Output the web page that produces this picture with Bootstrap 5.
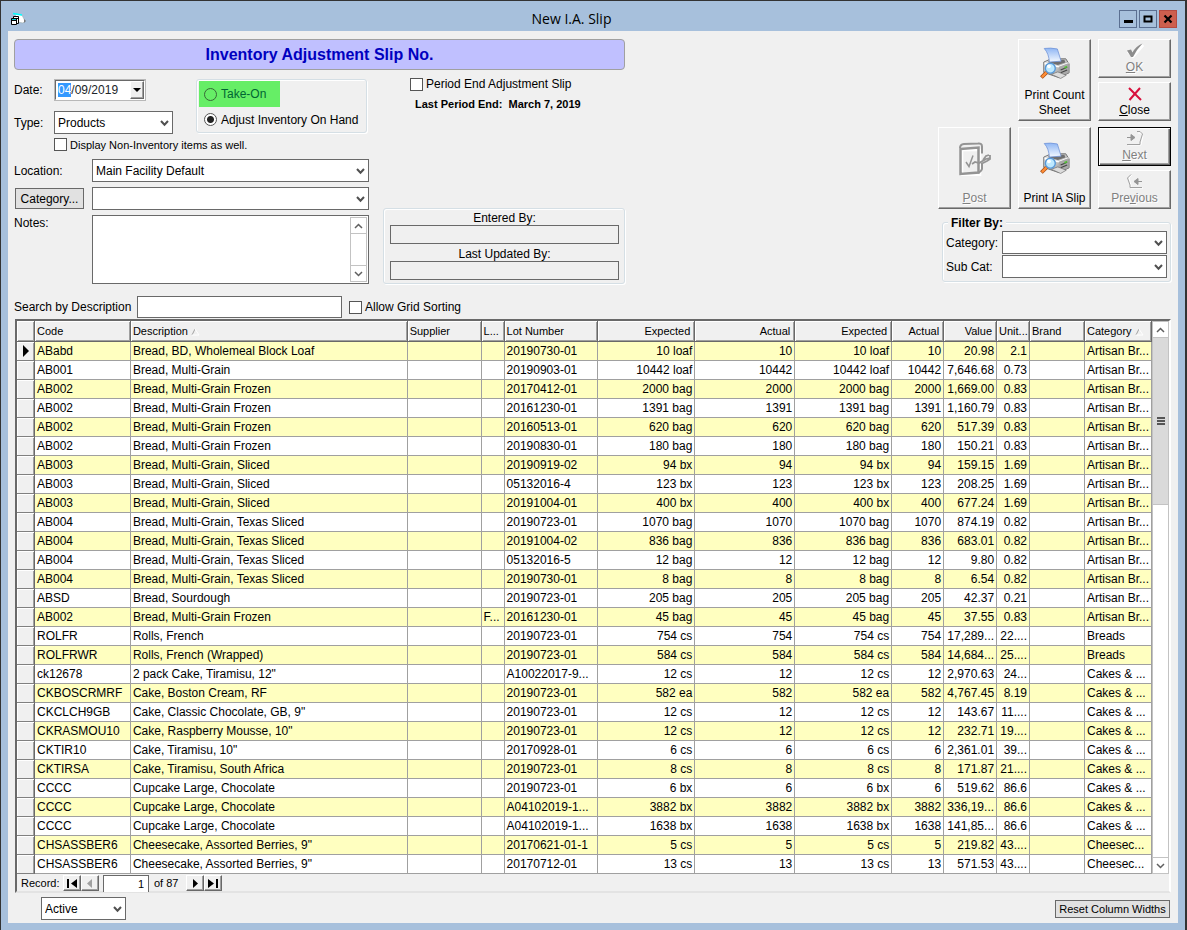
<!DOCTYPE html>
<html lang="en">
<head>
<meta charset="utf-8">
<meta name="viewport" content="width=device-width, initial-scale=1">
<title>New I.A. Slip</title>
<link href="https://cdn.jsdelivr.net/npm/bootstrap@5.3.0/dist/css/bootstrap.min.css" rel="stylesheet">
<style>
  :root { --face: #f0f0f0; --line: #a0a0a0; --dark: #696969; --frame: #a7c0dc; }
  body { background: var(--frame); color: #000; font: 12px/16px "Liberation Sans", Arial, sans-serif; min-height: 100vh; border: 1px solid #333; border-right-width: 2px; border-bottom: 0; }
  .defs { position: absolute; width: 0; height: 0; }
  .titlebar { height: 30px; padding: 0 8px 0 9px; }
  .titlebar h1 { font: 14px/20px "Open Sans", "Noto Sans", sans-serif; padding: 8px 19px 0 16px; }
  .winbtns { gap: 2px; }
  .winbtn { width: 18px; height: 18px; border: 1px solid #5b6f91; background: var(--frame); padding: 0; margin-top: 9px; display: flex; align-items: center; justify-content: center; }
  .winbtn.quit { background: #cd5f4e; border-color: #b64a40; }
  .client { background: var(--face); margin: 0 7px 7px; padding: 8px 7px 3px 6px; }
  .left-side { flex: 0 1 611px; }
  .banner { height: 31px; border: 1px solid var(--line); border-radius: 4px; background: #c0c0ff; color: #0000c0; font: bold 16px/29px "Liberation Sans", Arial, sans-serif; text-align: center; }
  .columns { padding-top: 9px; }
  .form-part { width: 355px; }
  .who-part { flex: 1; margin-left: 14px; }
  .form-select, .form-control { font-size: 12px; line-height: 16px; color: #000; border: 1px solid var(--dark); border-radius: 0; background-color: #fff; padding: 0 4px; height: 23px; min-height: 0; }
  .form-select { padding-left: 3px; background-image: url("data:image/svg+xml,%3Csvg xmlns='http://www.w3.org/2000/svg' viewBox='0 0 9 7'%3E%3Cpath d='M1 1l3.500 3.800L8 1' fill='none' stroke='%23505050' stroke-width='2'/%3E%3C/svg%3E"); background-size: 9px 7px; background-position: right 3px top 8px; }
  .form-control:focus { box-shadow: none; border-color: var(--dark); }
  .tag-short { width: 40px; } .tag-mid { width: 78px; flex: none; }
  .row-type { padding-top: 10px; } .row-type .form-select { width: 119px; }
  .row-extra { padding: 2px 0 0 40px; gap: 3px; height: 19px; }
  .row-next { padding-top: 5px; } .row-first { padding-top: 6px; }
  .row-search { padding-top: 12px; gap: 3px; }
  .row-search label:first-child { width: 120px; }
  .row-search .form-control { width: 205px; height: 22px; margin-right: 4px; }
  .date-box { width: 92px; height: 22px; border: 2px solid; border-color: var(--dark) #fff #fff var(--dark); outline: 1px solid #b8b8b8; outline-offset: -1px; background: #fff; }
  .date-box .form-control { border: 0; height: 18px; padding: 0 0 0 2px; }
  .date-box ::selection { background: #3399ff; color: #fff; }
  .raised { background: var(--face); border: 1px solid; border-color: #fff var(--dark) var(--dark) #fff; box-shadow: inset -1px -1px var(--line); padding: 0; color: #000; font-size: 12px; line-height: 16px; border-radius: 0; }
  .date-box .raised { width: 17px; height: 18px; }
  .group { border: 1px solid #d5dfe5; border-radius: 3px; box-shadow: inset 1px 1px #fff, 1px 1px #fff; }
  .tick { appearance: none; width: 13px; height: 13px; margin: 0; border: 1px solid #555; background: #fff; flex: none; }
  .tick[type=radio] { border-radius: 50%; }
  .tick[type=radio]:checked { background: radial-gradient(circle, #222 3px, #fff 4px); }
  .mode-box { width: 171px; height: 54px; padding: 1px 2px; margin: 0 2px 0 auto; }
  .take-on { background: #66ee66; height: 26px; width: 81px; padding-left: 5px; color: #063; }
  .take-on .tick { background: transparent; border-color: #386838; }
  .adjust-on { height: 25px; padding-left: 5px; }
  .flatbtn { border: 1px solid var(--dark); background: #e1e1e1; padding: 0; border-radius: 0; color: #000; }
  .cat-btn { width: 69px; height: 21px; margin-left: 1px; }
  .reset-btn { width: 115px; height: 18px; line-height: 14px; }
  .notes { border: 1px solid var(--dark); background: #fff; height: 69px; padding: 1px; }
  .notes textarea { border: 0; height: auto; resize: none; }
  .sbar { width: 17px; background: #fff; border: 1px solid #c3c3c3; flex: none; }
  .sbar button { height: 16px; border: 0; background: #fff; padding: 0; display: flex; align-items: center; justify-content: center; }
  .sbar button:first-child { border-bottom: 1px solid #c3c3c3; }
  .sbar button:last-child { border-top: 1px solid #c3c3c3; }
  .small-text { font-size: 11px; }
  .row-period { padding-left: 27px; gap: 3px; height: 10px; }
  .last-period { padding: 7px 0 0 32px; }
  .who { height: 76px; padding: 1px 5px 0 6px; line-height: 14px; }
  .who label { padding-top: 1px; }
  .who .form-control { height: 19px; background: var(--face); margin-bottom: 2px; }
  .tools { gap: 7px; } .tools:first-child { margin-bottom: 6px; }
  .tool { width: 73px; height: 39px; display: flex; flex-direction: column; align-items: center; justify-content: flex-end; line-height: 15px; padding-bottom: 2px; }
  .tool.tall { height: 82px; }
  .tool svg { margin-bottom: 2px; }
  .tool.tall svg { margin-bottom: auto; margin-top: 7px; }
  .tool.tall svg.low { margin-top: 14px; }
  .tool:disabled { color: #808080; text-shadow: 1px 1px #fff; }
  .tool.default { outline: 1px solid #000; outline-offset: -1px; border-color: #000; box-shadow: inset 1px 1px #fff, inset -1px -1px var(--dark), inset -2px -2px var(--line); }
  .filter { width: 229px; height: 60px; margin-top: 13px; padding: 8px 3px 0 3px; position: relative; }
  .filter legend { position: absolute; top: -8px; left: 5px; width: auto; padding: 0 3px; margin: 0; background: var(--face); font: bold 12px/16px "Liberation Sans", Arial, sans-serif; }
  .filter label { width: 56px; flex: none; }
  .filter .form-select { margin-bottom: 1px; }
  .grid-frame { margin: 1px 0 0 1px; border: 2px solid; border-color: var(--dark) #fff #e3e3e3 var(--dark); }
  .slips { table-layout: fixed; width: 100%; border-collapse: separate; border-spacing: 0; }
  .slips th { height: 21px; line-height: 17px; padding: 1px 4px 0 2px; font-weight: normal; font-size: 11px; background: var(--face); border-right: 1px solid var(--dark); border-bottom: 1px solid var(--dark); box-shadow: inset 1px 1px #fff, inset -1px -1px var(--line); white-space: nowrap; overflow: hidden; }
  .slips td { height: 19px; line-height: 18px; padding: 0 2px; border-right: 1px solid var(--line); border-bottom: 1px solid var(--line); white-space: nowrap; overflow: hidden; background: #fff; }
  .slips tbody tr:nth-child(odd) td { background: #ffffc0; }
  .slips tbody tr td:first-child { background: var(--face); border-right-color: var(--dark); box-shadow: inset 1px 1px #fff, inset -1px 0 var(--line); border-bottom-color: #808080; }
  .thumb { height: 167px; background: #dadada; border-bottom: 1px solid #c3c3c3; display: flex; align-items: center; justify-content: center; }
  .record { height: 17px; font-size: 11px; padding: 1px 0 0 4px; }
  .record label { width: 42px; } .record span { width: 32px; }
  .record .raised { width: 18px; height: 16px; display: flex; align-items: center; justify-content: center; }
  .record .form-control { width: 46px; height: 17px; font-size: 11px; padding: 0 4px; border-bottom: 0; margin: 0 5px 0 4px; }
  .bottom-bar { padding: 4px 1px 0 27px; } .bottom-bar .form-select { width: 85px; }
</style>
</head>
<body>
<svg class="defs" aria-hidden="true">
  <defs>
    <linearGradient id="sheet" x1="0" y1="0" x2="0" y2="1"><stop offset="0" stop-color="#8fb6f4"/><stop offset="1" stop-color="#f4f9ff"/></linearGradient>
    <linearGradient id="case" x1="0" y1="0" x2="1" y2="1"><stop offset="0" stop-color="#f2f2f2"/><stop offset="1" stop-color="#8c8c8c"/></linearGradient>
    <symbol id="printer" viewBox="0 0 32 34">
      <path d="M4 16L12 12.500h15.500L31 18v9.500L20 32.500 4 27z" fill="url(#case)" stroke="#6e6e6e"/>
      <path d="M5 17.500l15 3.500 10.500-4" fill="none" stroke="#fff" stroke-width="1.500"/>
      <path d="M20 21v11l10.500-4.500V17z" fill="#a9a9a9"/>
      <path d="M8 16l5-2.500h13l1 3-8 2.500z" fill="#6f6f6f"/>
      <path d="M4.500 1.500Q11 .5 18.500 2l4 13-12.500 1Q9.500 7 4.500 1.500z" fill="url(#sheet)" stroke="#6b8fd6" stroke-width=".8"/>
      <path d="M22 24.500l7-3M22 27.500l7-3" stroke="#444" stroke-width="1.200"/>
      <path d="M26 21l3-1.200v2L26 23z" fill="#52c234"/>
      <path d="M12 29l7-2.500 9 3.500-6 3.500z" fill="#dcdcdc" stroke="#777" stroke-width=".8"/>
      <path d="M7 27l-5.500 5.500" stroke="#a04a14" stroke-width="4"/><path d="M7 27l-5 5" stroke="#ff8d35" stroke-width="2.500"/>
      <circle cx="11" cy="22.500" r="5.300" fill="#bde9ff" stroke="#5798d8" stroke-width="1.500"/>
      <circle cx="9.500" cy="20.500" r="2" fill="#fff"/>
    </symbol>
    <symbol id="up" viewBox="0 0 9 6"><path d="M1 5l3.500-3.500L8 5" fill="none" stroke="#606060" stroke-width="1.500"/></symbol>
    <symbol id="down" viewBox="0 0 9 6"><path d="M1 1l3.500 3.500L8 1" fill="none" stroke="#606060" stroke-width="1.500"/></symbol>
  </defs>
</svg>

<header class="titlebar d-flex">
  <svg class="mt-2" width="17" height="20" viewBox="0 0 17 20" aria-hidden="true">
    <path d="M5 5l7 1 3 6-2 2-6-1z" fill="#fff" stroke="#9aa" stroke-width=".6"/><path d="M3 4.500l9 1.500" stroke="#0ff" stroke-width="1.500"/><path d="M14 10l2 2-2 2" fill="#777"/>
    <path d="M3.500 7.500h5v7h-5z" fill="#fff" stroke="#000"/><path d="M1.500 9.500h5v6h-5z" fill="#fff" stroke="#000"/><path d="M1 11.500h6M4 9.500h5" stroke="#000"/><path d="M2 10.500h4" stroke="#0cc"/>
  </svg>
  <h1 class="flex-grow-1 text-center m-0">New I.A. Slip</h1>
  <div class="winbtns d-flex">
    <button class="winbtn" type="button" aria-label="Minimize"><svg width="10" height="10"><path d="M1 7.500h9" stroke="#000" stroke-width="3"/></svg></button>
    <button class="winbtn" type="button" aria-label="Maximize"><svg width="10" height="10"><path d="M1.500 2.500h7v5h-7z" fill="none" stroke="#000" stroke-width="2"/></svg></button>
    <button class="winbtn quit" type="button" aria-label="Close window"><svg width="10" height="10"><path d="M1.500 1.500l7 7M8.500 1.500l-7 7" stroke="#000" stroke-width="2.200"/></svg></button>
  </div>
</header>

<main class="client">
  <div class="d-flex justify-content-between">
    <section class="left-side">
      <div class="banner">Inventory Adjustment Slip No.</div>
      <div class="columns d-flex">
        <div class="form-part">
          <div class="d-flex">
            <div>
              <div class="d-flex align-items-center">
                <label class="tag-short" for="date">Date:</label>
                <div class="date-box d-flex"><input id="date" class="form-control" value="04/09/2019"><button class="raised" type="button" aria-label="Open calendar"><svg class="d-block mx-auto" width="8" height="4"><path d="M0 0h8L4 4z"/></svg></button></div>
              </div>
              <div class="row-type d-flex align-items-center">
                <label class="tag-short" for="type">Type:</label>
                <select id="type" class="form-select"><option>Products</option></select>
              </div>
            </div>
            <div class="group mode-box">
              <div class="take-on d-flex align-items-center gap-1"><input class="tick" type="radio" name="mode" id="take"><label for="take">Take-On</label></div>
              <div class="adjust-on d-flex align-items-center gap-1"><input class="tick" type="radio" name="mode" id="adjust" checked><label for="adjust">Adjust Inventory On Hand</label></div>
            </div>
          </div>
          <div class="row-extra d-flex align-items-center small-text"><input class="tick" type="checkbox" id="noninv"><label for="noninv">Display Non-Inventory items as well.</label></div>
          <div class="row-first d-flex align-items-center"><label class="tag-mid" for="loc">Location:</label><select id="loc" class="form-select"><option>Main Facility Default</option></select></div>
          <div class="row-next d-flex align-items-center"><div class="tag-mid"><button class="flatbtn cat-btn" type="button">Category...</button></div><select class="form-select" aria-label="Category"><option></option></select></div>
          <div class="row-next d-flex"><label class="tag-mid" for="notes">Notes:</label>
            <div class="notes d-flex flex-grow-1"><textarea id="notes" class="form-control"></textarea>
              <div class="sbar d-flex flex-column justify-content-between"><button type="button" aria-label="Scroll up"><svg width="9" height="6"><use href="#up"/></svg></button><button type="button" aria-label="Scroll down"><svg width="9" height="6"><use href="#down"/></svg></button></div></div>
          </div>
        </div>
        <div class="who-part d-flex flex-column">
          <div class="row-period d-flex align-items-center"><input class="tick" type="checkbox" id="period"><label for="period">Period End Adjustment Slip</label></div>
          <div class="last-period fw-bold small-text">Last Period End:&nbsp; March 7, 2019</div>
          <div class="group who mt-auto text-center">
            <label class="d-block" for="entered">Entered By:</label><input id="entered" class="form-control" readonly>
            <label class="d-block" for="updated">Last Updated By:</label><input id="updated" class="form-control" readonly>
          </div>
        </div>
      </div>
      <div class="row-search d-flex align-items-center"><label for="search">Search by Description</label><input id="search" class="form-control"><input class="tick" type="checkbox" id="sorting"><label for="sorting">Allow Grid Sorting</label></div>
    </section>

    <aside class="d-flex flex-column align-items-end">
      <div class="tools d-flex">
        <button class="raised tool tall" type="button"><svg width="30" height="32"><use href="#printer"/></svg>Print Count Sheet</button>
        <div class="d-flex flex-column gap-1">
          <button class="raised tool" type="button" disabled><svg width="18" height="15" viewBox="0 0 18 15"><path d="M2 8.500l5 5L17 2" fill="none" stroke="#fff" stroke-width="3"/><path d="M1 7.500l4-1 1.500 3Q10 3 16.500 .5 11 6 7 14H5z" fill="#8d8d8d"/></svg><span><u>O</u>K</span></button>
          <button class="raised tool" type="button"><svg width="14" height="14" viewBox="0 0 14 14"><path d="M1 1l12 12M12 1L1.500 13" stroke="#d8103c" stroke-width="2"/></svg><span><u>C</u>lose</span></button>
        </div>
      </div>
      <div class="tools d-flex">
        <button class="raised tool tall" type="button" disabled><svg class="low" width="33" height="34" viewBox="0 0 33 34"><path d="M4 8h18v25H4z" fill="none" stroke="#fff" stroke-width="2.500"/><g fill="none" stroke="#949494"><path d="M2.500 7L20.500 5.500v25L2.500 32z" stroke-width="2.500"/><path d="M2 6q0-3.500 4-4l14-.5q4-.5 4 3v7M24 22v5q-1 3-4 3.500" stroke-width="2"/><path d="M8 20l3 4.500 4-11" stroke-width="1.500"/><path d="M14 22l3-2 4 1 7-4 4-1M25 18l3-4 3-1M32 13v4l-3 2-6 3" stroke-width="1.800"/></g></svg><span><u>P</u>ost</span></button>
        <button class="raised tool tall" type="button"><svg class="low" width="30" height="32"><use href="#printer"/></svg>Print IA Slip</button>
        <div class="d-flex flex-column gap-1">
          <button class="raised tool default" type="button" disabled><svg width="18" height="15" viewBox="0 0 18 15"><path d="M12 2h3l2 3-2 9H2" fill="none" stroke="#fff"/><path d="M11 .5h3L16.500 3 14 11v2.500H1" fill="none" stroke="#a0a0a0"/><path d="M1 6.500h5M5 3.500l4 3-4 3z" fill="#949494" stroke="#949494"/></svg><span><u>N</u>ext</span></button>
          <button class="raised tool" type="button" disabled><svg width="18" height="15" viewBox="0 0 18 15"><path d="M6 1L3 4l2 7v3h12" fill="none" stroke="#fff"/><path d="M5 .5L1.500 4 4 11v2.500h12" fill="none" stroke="#a0a0a0"/><path d="M16 7.500h-5M12 4.500l-4 3 4 3z" fill="#949494" stroke="#949494"/></svg><span>Pre<u>v</u>ious</span></button>
        </div>
      </div>
      <fieldset class="group filter">
        <legend>Filter By:</legend>
        <div class="d-flex align-items-center"><label for="fcat">Category:</label><select id="fcat" class="form-select"><option></option></select></div>
        <div class="d-flex align-items-center"><label for="fsub">Sub Cat:</label><select id="fsub" class="form-select"><option></option></select></div>
      </fieldset>
    </aside>
  </div>

  <div class="grid-frame">
    <div class="d-flex">
      <table class="slips">
        <colgroup id="cols"></colgroup>
        <thead><tr>
          <th></th><th>Code</th><th>Description <svg width="9" height="8"><path d="M1 7l3-6" stroke="#a0a0a0"/><path d="M4 1l4 6H1" stroke="#fff" fill="none"/></svg></th><th>Supplier</th><th>L...</th><th>Lot Number</th>
          <th class="text-end">Expected</th><th class="text-end">Actual</th><th class="text-end">Expected</th><th class="text-end">Actual</th><th class="text-end">Value</th><th>Unit...</th><th>Brand</th>
          <th>Category <svg width="9" height="8"><path d="M1 7l3-6" stroke="#a0a0a0"/><path d="M4 1l4 6H1" stroke="#fff" fill="none"/></svg></th>
        </tr></thead>
        <tbody id="rows"></tbody>
      </table>
      <div class="sbar d-flex flex-column">
        <button type="button" aria-label="Scroll up"><svg width="9" height="6"><use href="#up"/></svg></button>
        <div class="thumb"><svg width="8" height="8"><path d="M0 1h8M0 4h8M0 7h8" stroke="#555" stroke-width="2"/></svg></div>
        <button class="mt-auto" type="button" aria-label="Scroll down"><svg width="9" height="6"><use href="#down"/></svg></button>
      </div>
    </div>
    <div class="record d-flex align-items-center">
      <label for="rec">Record:</label>
      <button class="raised" type="button" aria-label="First"><svg width="12" height="9"><path d="M1 0h2v9H1zM11 0v9L5 4.500z"/></svg></button>
      <button class="raised" type="button" aria-label="Previous record" disabled><svg width="12" height="9"><path d="M8 0v9L3 4.500z" fill="#a0a0a0"/></svg></button>
      <input id="rec" class="form-control text-end" value="1">
      <span>of 87</span>
      <button class="raised" type="button" aria-label="Next record"><svg width="12" height="9"><path d="M4 0v9l5-4.500z"/></svg></button>
      <button class="raised" type="button" aria-label="Last"><svg width="12" height="9"><path d="M1 0v9l6-4.500zM9 0h2v9H9z"/></svg></button>
    </div>
  </div>

  <footer class="bottom-bar d-flex justify-content-between align-items-center">
    <select class="form-select" aria-label="Status"><option>Active</option></select>
    <button class="flatbtn reset-btn small-text" type="button">Reset Column Widths</button>
  </footer>
</main>

<script src="https://cdn.jsdelivr.net/npm/bootstrap@5.3.0/dist/js/bootstrap.bundle.min.js"></script>
<script>
  const widths = [18, 96, 277, 74, 23, 94, 97, 100, 97, 52, 53, 33, 55, 67];
  const total = widths.reduce((a, b) => a + b);
  document.getElementById('cols').innerHTML = widths.map(w => `<col style="width:${w / total * 100}%">`).join('');
  // code | description | L... | lot | quantity | unit | value | unit cost | category
  const data = `ABabd|Bread, BD, Wholemeal Block Loaf||20190730-01|10|loaf|20.98|2.1|Artisan Br...
AB001|Bread, Multi-Grain||20190903-01|10442|loaf|7,646.68|0.73|Artisan Br...
AB002|Bread, Multi-Grain Frozen||20170412-01|2000|bag|1,669.00|0.83|Artisan Br...
AB002|Bread, Multi-Grain Frozen||20161230-01|1391|bag|1,160.79|0.83|Artisan Br...
AB002|Bread, Multi-Grain Frozen||20160513-01|620|bag|517.39|0.83|Artisan Br...
AB002|Bread, Multi-Grain Frozen||20190830-01|180|bag|150.21|0.83|Artisan Br...
AB003|Bread, Multi-Grain, Sliced||20190919-02|94|bx|159.15|1.69|Artisan Br...
AB003|Bread, Multi-Grain, Sliced||05132016-4|123|bx|208.25|1.69|Artisan Br...
AB003|Bread, Multi-Grain, Sliced||20191004-01|400|bx|677.24|1.69|Artisan Br...
AB004|Bread, Multi-Grain, Texas Sliced||20190723-01|1070|bag|874.19|0.82|Artisan Br...
AB004|Bread, Multi-Grain, Texas Sliced||20191004-02|836|bag|683.01|0.82|Artisan Br...
AB004|Bread, Multi-Grain, Texas Sliced||05132016-5|12|bag|9.80|0.82|Artisan Br...
AB004|Bread, Multi-Grain, Texas Sliced||20190730-01|8|bag|6.54|0.82|Artisan Br...
ABSD|Bread, Sourdough||20190723-01|205|bag|42.37|0.21|Artisan Br...
AB002|Bread, Multi-Grain Frozen|F...|20161230-01|45|bag|37.55|0.83|Artisan Br...
ROLFR|Rolls, French||20190723-01|754|cs|17,289...|22....|Breads
ROLFRWR|Rolls, French (Wrapped)||20190723-01|584|cs|14,684...|25....|Breads
ck12678|2 pack Cake, Tiramisu, 12"||A10022017-9...|12|cs|2,970.63|24...|Cakes & ...
CKBOSCRMRF|Cake, Boston Cream, RF||20190723-01|582|ea|4,767.45|8.19|Cakes & ...
CKCLCH9GB|Cake, Classic Chocolate, GB, 9"||20190723-01|12|cs|143.67|11....|Cakes & ...
CKRASMOU10|Cake, Raspberry Mousse, 10"||20190723-01|12|cs|232.71|19....|Cakes & ...
CKTIR10|Cake, Tiramisu, 10"||20170928-01|6|cs|2,361.01|39...|Cakes & ...
CKTIRSA|Cake, Tiramisu, South Africa||20190723-01|8|cs|171.87|21....|Cakes & ...
CCCC|Cupcake Large, Chocolate||20190723-01|6|bx|519.62|86.6|Cakes & ...
CCCC|Cupcake Large, Chocolate||A04102019-1...|3882|bx|336,19...|86.6|Cakes & ...
CCCC|Cupcake Large, Chocolate||A04102019-1...|1638|bx|141,85...|86.6|Cakes & ...
CHSASSBER6|Cheesecake, Assorted Berries, 9"||20170621-01-1|5|cs|219.82|43....|Cheesec...
CHSASSBER6|Cheesecake, Assorted Berries, 9"||20170712-01|13|cs|571.53|43....|Cheesec...`;
  document.getElementById('rows').innerHTML = data.split('\n').map((line, i) => {
    const [code, desc, l, lot, qty, unit, value, cost, cat] = line.replace(/&/g, '&amp;').split('|');
    const num = v => `<td class="text-end">${v}</td>`;
    const mark = i ? '' : '<svg class="d-block ms-1" width="6" height="12"><path d="M0 0l6 6-6 6z"/></svg>';
    return `<tr><td>${mark}</td><td>${code}</td><td>${desc}</td><td></td><td>${l}</td><td>${lot}</td>` +
      num(qty + ' ' + unit) + num(qty) + num(qty + ' ' + unit) + num(qty) + num(value) + num(cost) + `<td></td><td>${cat}</td></tr>`;
  }).join('');
  // The month part of the date is selected when the form opens
  const date = document.getElementById('date');
  date.focus();
  date.setSelectionRange(0, 2);
</script>
</body>
</html>
